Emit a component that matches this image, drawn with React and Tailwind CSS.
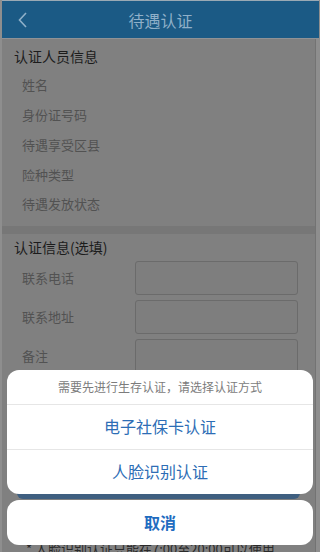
import React from "react";

const personRows = ["姓名", "身份证号码", "待遇享受区县", "险种类型", "待遇发放状态"];
const inputRows = ["联系电话", "联系地址", "备注"];

export default function App() {
  return (
    <div
      className="relative h-[552px] w-[320px] overflow-hidden bg-[#8e8e8e] pl-[2px] pr-[4px]"
      style={{ fontFamily: '"Noto Sans CJK SC", "Noto Sans", sans-serif' }}
    >
      {/* page behind the sheet (already dimmed) */}
      <div className="h-full bg-[#808080] border-r border-[#737373]">
        <div className="flex h-[39px] items-center border-t border-[#9aa9b4] border-b border-b-[#8f9296] bg-[#1b5a85] -mr-[4px] relative">
          <svg className="absolute left-[15px] top-[10px]" width="12" height="18" viewBox="0 0 12 18">
            <path d="M9 2 L2.5 9 L9 16" fill="none" stroke="#8fb0c9" strokeWidth="1.6" />
          </svg>
          <div className="w-full text-center text-[16px] text-[#8fb0c9]">待遇认证</div>
        </div>

        {/* section 1 */}
        <div className="px-[12px] pt-[7px] pb-[7px]">
          <div className="h-[20px] leading-[20px] text-[14px] text-[#1c1c1c]">认证人员信息</div>
          <div className="mt-[4px]">
            {personRows.map((r) => (
              <div key={r} className="flex h-[29.8px] items-center pl-[8px] text-[13px] text-[#525252]">
                {r}
              </div>
            ))}
          </div>
        </div>
        <div className="h-[8px] bg-[#777777]" />

        {/* section 2 */}
        <div className="px-[12px] pt-[3px]">
          <div className="h-[20px] leading-[20px] text-[14px] text-[#1c1c1c]">认证信息(选填)</div>
          <div className="mt-[4px] flex flex-col gap-[5px]">
            {inputRows.map((r) => (
              <div key={r} className="flex items-center">
                <div className="w-[121px] pl-[8px] text-[13px] text-[#525252]">{r}</div>
                <div className="h-[34px] w-[163px] rounded-[3px] border border-[#6b6b6b] bg-[#7e7e7e]" />
              </div>
            ))}
          </div>
          <div className="mt-[82px] mx-[3px] h-[44px] rounded-[6px] bg-[#3f5f80]" />
          <div className="mt-[42px] pl-[12px] text-[13px] leading-[16px] text-[#2a2a2a]">
            * 人脸识别认证只能在7:00至20:00可以使用
          </div>
        </div>
      </div>

      {/* action sheet */}
      <div className="absolute left-[7px] right-[7px] bottom-[7px] flex flex-col gap-[6px]">
        <div className="overflow-hidden rounded-[12px] bg-white">
          <div className="flex h-[34px] items-center justify-center text-[12px] text-[#7c7c7c]">
            需要先进行生存认证，请选择认证方式
          </div>
          <div className="flex h-[45px] items-center justify-center border-t border-[#e6e6e6] pb-[2px] text-[16px] text-[#2d6db5]">
            电子社保卡认证
          </div>
          <div className="flex h-[45px] items-center justify-center border-t border-[#e6e6e6] pb-[2px] text-[16px] text-[#2d6db5]">
            人脸识别认证
          </div>
        </div>
        <div className="flex h-[45px] items-center justify-center rounded-[12px] bg-white pb-[2px] text-[16px] font-semibold text-[#1f6cc0]">
          取消
        </div>
      </div>
    </div>
  );
}
